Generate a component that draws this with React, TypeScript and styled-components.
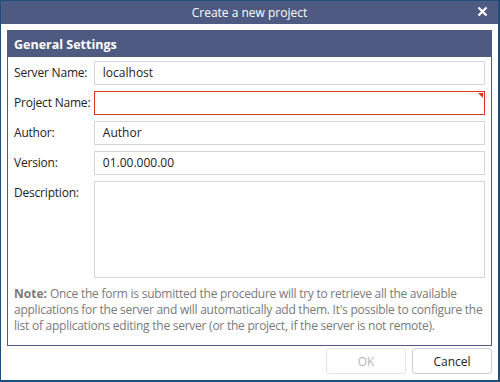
import styled, { createGlobalStyle } from "styled-components";

const Global = createGlobalStyle`
  html, body { margin: 0; padding: 0; background: #fff; }
  body { font-family: "Open Sans", "Liberation Sans", sans-serif; }
  * { box-sizing: border-box; }
`;

const Window = styled.div`
  width: 500px;
  height: 382px;
  border: 1px solid #1d4f7d;
  border-right-width: 2px;
  border-bottom-width: 2px;
  display: flex;
  flex-direction: column;
  background: #fff;
`;

const TitleBar = styled.div`
  height: 23px;
  background: #4f5a83;
  color: #fff;
  font-size: 12px;
  display: flex;
  align-items: center;
  justify-content: center;
  position: relative;
  flex-shrink: 0;
`;

const Close = styled.span`
  position: absolute;
  right: 10px;
  top: 5px;
  display: flex;
`;

const Body = styled.div`
  flex: 1;
  display: flex;
  flex-direction: column;
  padding: 6px 6px 0 6px;
`;

const Group = styled.div`
  border: 1px solid #4f5a83;
  display: flex;
  flex-direction: column;
  height: 316px;
`;

const GroupHeader = styled.div`
  height: 26px;
  background: #4f5a83;
  color: #fff;
  font-weight: 700;
  font-size: 12.5px;
  display: flex;
  align-items: center;
  padding-left: 6px;
`;

const Form = styled.div`
  display: flex;
  flex-direction: column;
  gap: 6px;
  padding: 4px 6px 0 6px;
`;

const Row = styled.div`
  display: flex;
  align-items: flex-start;
`;

const Label = styled.div`
  width: 80px;
  font-size: 12px;
  color: #222;
  line-height: 24px;
  letter-spacing: -0.2px;
`;

const Field = styled.div<{ $invalid?: boolean; $tall?: boolean }>`
  position: relative;
  width: 392px;
  height: ${(p) => (p.$tall ? "97px" : "24px")};
  border: 1px solid ${(p) => (p.$invalid ? "#d9381e" : "#d6d6d6")};
  font-size: 12px;
  color: #222;
  padding: 0 8px;
  line-height: 22px;
`;

const Flag = styled.span`
  position: absolute;
  top: 1px;
  right: 1px;
  width: 0;
  height: 0;
  border-top: 5px solid #d9381e;
  border-left: 5px solid transparent;
`;

const Note = styled.div`
  margin: 8px 0 0 0;
  padding: 0 6px;
  font-size: 12px;
  line-height: 16px;
  color: #7a7a7a;
  letter-spacing: -0.25px;
  display: flex;
  flex-direction: column;
`;

const NoteLine = styled.span`
  white-space: nowrap;
`;

const NoteLead = styled.b`
  font-weight: 700;
  letter-spacing: 0;
  margin-right: 3px;
`;

const Footer = styled.div`
  display: flex;
  justify-content: flex-end;
  gap: 6px;
  padding: 2px 0 0 0;
`;

const Button = styled.button<{ $disabled?: boolean }>`
  width: 80px;
  height: 26px;
  background: #fff;
  border: 1px solid ${(p) => (p.$disabled ? "#e4e4e4" : "#cfcfcf")};
  border-radius: 3px;
  font-family: inherit;
  font-size: 12px;
  color: ${(p) => (p.$disabled ? "#b4b4b4" : "#222")};
  padding: 0;
`;

const App = () => {
  return (
    <>
      <Global />
      <Window>
        <TitleBar>
          Create a new project
          <Close>
            <svg width="11" height="11" viewBox="0 0 11 11">
              <path d="M1.5 1.5 L9.5 9.5 M9.5 1.5 L1.5 9.5" stroke="#fff" strokeWidth="2.2" />
            </svg>
          </Close>
        </TitleBar>
        <Body>
          <Group>
            <GroupHeader>General Settings</GroupHeader>
            <Form>
              <Row>
                <Label>Server Name:</Label>
                <Field>localhost</Field>
              </Row>
              <Row>
                <Label>Project Name:</Label>
                <Field $invalid>
                  <Flag />
                </Field>
              </Row>
              <Row>
                <Label>Author:</Label>
                <Field>Author</Field>
              </Row>
              <Row>
                <Label>Version:</Label>
                <Field>01.00.000.00</Field>
              </Row>
              <Row>
                <Label>Description:</Label>
                <Field $tall />
              </Row>
            </Form>
            <Note>
              <NoteLine>
                <NoteLead>Note:</NoteLead>Once the form is submitted the procedure will try to retrieve all the available
              </NoteLine>
              <NoteLine>
                applications for the server and will automatically add them. It's possible to configure the
              </NoteLine>
              <NoteLine>
                list of applications editing the server (or the project, if the server is not remote).
              </NoteLine>
            </Note>
          </Group>
          <Footer>
            <Button $disabled>OK</Button>
            <Button>Cancel</Button>
          </Footer>
        </Body>
      </Window>
    </>
  );
};

export default App;
